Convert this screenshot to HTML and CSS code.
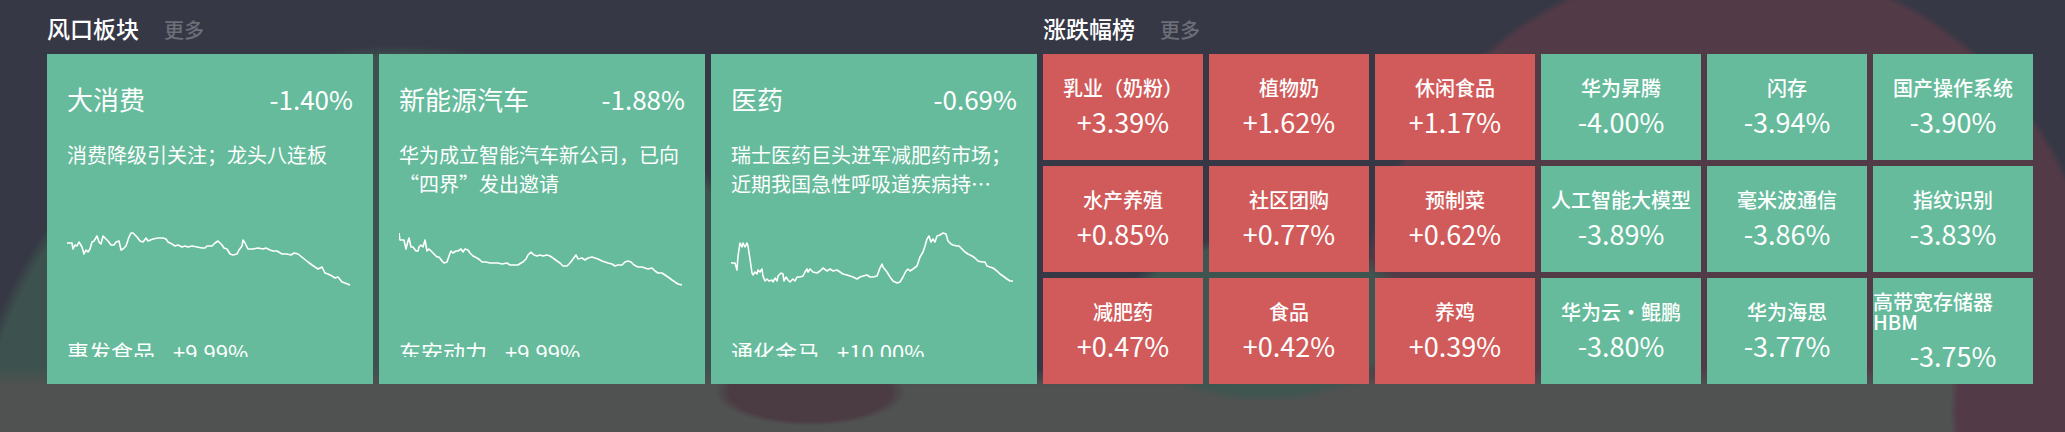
FILE: index.html
```html
<!DOCTYPE html>
<html lang="zh-CN">
<head>
    <meta charset="UTF-8">
    <meta name="viewport" content="width=device-width, initial-scale=1.0">
    <title>板块行情</title>
    <link rel="stylesheet" href="styles.css">
</head>
<body>
    <div class="board">
        <!-- 风口板块 -->
        <section class="panel">
            <div class="panel-head">
                <h2>风口板块</h2>
                <a class="more" href="#">更多</a>
            </div>
            <div class="hot-list">
                <div class="hot-card">
                    <div class="hot-inner">
                        <div class="hot-top"><span>大消费</span><span>-1.40%</span></div>
                        <p class="hot-desc">消费降级引关注；龙头八连板</p>
                        <svg class="hot-chart" viewBox="0 0 286 138" preserveAspectRatio="none">
                            <polyline points="0,45 5,45 6,51 8,47 10,48 12,44 15,49 17,56 19,52 21,54 23,51 25,44 27,43 30,38 32,44 34,46 36,38 38,40 41,43 44,47 47,47 49,44 52,43 54,52 56,51 59,48 62,39 64,35 66,35 70,39 73,43 76,44 79,40 81,43 86,41 91,40 96,40 99,41 101,44 105,46 108,48 111,47 115,49 118,48 121,49 125,48 130,49 135,50 138,50 140,48 145,48 148,45 151,43 155,47 157,50 160,51 163,56 166,57 170,56 172,52 175,48 176,42 178,45 181,51 186,51 191,50 196,51 199,50 203,52 206,53 210,53 215,56 220,56 224,57 227,55 231,56 236,60 241,64 245,67 248,69 251,71 255,69 258,75 261,76 265,78 268,80 271,79 275,84 278,85 283,87"/>
                        </svg>
                        <div class="hot-lead"><span>惠发食品</span><span class="lead-rate">+9.99%</span></div>
                    </div>
                </div>
                <div class="hot-card">
                    <div class="hot-inner">
                        <div class="hot-top"><span>新能源汽车</span><span>-1.88%</span></div>
                        <p class="hot-desc">华为成立智能汽车新公司，已向“四界”发出邀请</p>
                        <svg class="hot-chart" viewBox="0 0 286 138" preserveAspectRatio="none">
                            <polyline points="0,35 1,42 5,42 7,51 9,43 10,40 12,49 14,49 17,53 19,53 20,49 22,47 24,49 26,42 28,53 30,51 33,54 35,56 38,59 40,59 43,63 45,65 48,64 50,58 52,53 54,55 57,53 59,53 62,51 64,54 66,51 69,52 71,55 74,58 78,60 81,62 83,64 87,64 91,65 96,65 99,65 103,66 108,65 111,67 114,67 119,67 122,65 124,64 127,61 129,57 132,54 135,57 138,58 141,57 144,58 148,57 151,58 154,60 158,63 161,65 164,68 168,68 171,65 174,61 177,57 179,61 183,60 186,62 189,60 193,59 196,60 199,61 203,63 206,64 209,65 213,66 216,68 219,67 223,67 226,64 229,63 232,64 235,67 239,69 243,69 246,70 249,71 253,70 256,73 259,75 263,75 266,77 269,79 273,82 276,84 279,86 283,87"/>
                        </svg>
                        <div class="hot-lead"><span>东安动力</span><span class="lead-rate">+9.99%</span></div>
                    </div>
                </div>
                <div class="hot-card">
                    <div class="hot-inner">
                        <div class="hot-top"><span>医药</span><span>-0.69%</span></div>
                        <p class="hot-desc">瑞士医药巨头进军减肥药市场；近期我国急性呼吸道疾病持…</p>
                        <svg class="hot-chart" viewBox="0 0 286 138" preserveAspectRatio="none">
                            <polyline points="0,65 4,65 6,72 7,58 9,45 11,49 12,45 14,49 16,45 17,48 19,61 21,75 22,77 24,74 26,76 27,72 29,74 31,71 32,78 34,83 36,81 38,83 41,82 42,84 44,80 46,83 47,78 50,75 52,76 53,83 55,79 57,82 59,84 62,81 64,83 66,79 69,79 72,78 74,74 76,71 77,74 79,71 82,74 86,75 89,73 92,70 96,73 99,71 102,73 106,72 109,74 112,76 116,77 119,78 122,79 126,81 129,79 132,78 136,77 139,79 142,79 146,78 149,70 151,66 152,69 156,74 159,79 162,83 166,85 169,84 172,79 175,73 177,71 179,73 182,71 186,68 189,59 192,54 194,48 196,41 198,38 200,44 202,41 204,44 206,38 209,37 212,35 215,36 217,43 220,46 222,47 226,48 228,48 231,51 234,54 237,56 241,58 244,60 247,63 251,64 254,64 256,68 259,69 262,70 266,73 269,76 272,78 276,81 279,83 282,83"/>
                        </svg>
                        <div class="hot-lead"><span>通化金马</span><span class="lead-rate">+10.00%</span></div>
                    </div>
                </div>
            </div>
        </section>

        <!-- 涨跌幅榜 -->
        <section class="panel">
            <div class="panel-head">
                <h2>涨跌幅榜</h2>
                <a class="more" href="#">更多</a>
            </div>
            <div class="rank-grid">
                <div class="rank-item up"><span class="rank-name">乳业（奶粉）</span><span class="rank-rate">+3.39%</span></div>
                <div class="rank-item up"><span class="rank-name">植物奶</span><span class="rank-rate">+1.62%</span></div>
                <div class="rank-item up"><span class="rank-name">休闲食品</span><span class="rank-rate">+1.17%</span></div>
                <div class="rank-item down"><span class="rank-name">华为昇腾</span><span class="rank-rate">-4.00%</span></div>
                <div class="rank-item down"><span class="rank-name">闪存</span><span class="rank-rate">-3.94%</span></div>
                <div class="rank-item down"><span class="rank-name">国产操作系统</span><span class="rank-rate">-3.90%</span></div>

                <div class="rank-item up"><span class="rank-name">水产养殖</span><span class="rank-rate">+0.85%</span></div>
                <div class="rank-item up"><span class="rank-name">社区团购</span><span class="rank-rate">+0.77%</span></div>
                <div class="rank-item up"><span class="rank-name">预制菜</span><span class="rank-rate">+0.62%</span></div>
                <div class="rank-item down"><span class="rank-name">人工智能大模型</span><span class="rank-rate">-3.89%</span></div>
                <div class="rank-item down"><span class="rank-name">毫米波通信</span><span class="rank-rate">-3.86%</span></div>
                <div class="rank-item down"><span class="rank-name">指纹识别</span><span class="rank-rate">-3.83%</span></div>

                <div class="rank-item up"><span class="rank-name">减肥药</span><span class="rank-rate">+0.47%</span></div>
                <div class="rank-item up"><span class="rank-name">食品</span><span class="rank-rate">+0.42%</span></div>
                <div class="rank-item up"><span class="rank-name">养鸡</span><span class="rank-rate">+0.39%</span></div>
                <div class="rank-item down"><span class="rank-name">华为云·鲲鹏</span><span class="rank-rate">-3.80%</span></div>
                <div class="rank-item down"><span class="rank-name">华为海思</span><span class="rank-rate">-3.77%</span></div>
                <div class="rank-item down"><span class="rank-name">高带宽存储器HBM</span><span class="rank-rate">-3.75%</span></div>
            </div>
        </section>
    </div>
</body>
</html>
```

FILE: styles.css
```css
* {
    box-sizing: border-box;
    margin: 0;
    padding: 0;
}
body {
    width: 2065px;
    height: 432px;
    overflow: hidden;
    font-family: "Noto Sans CJK SC", "Noto Sans", sans-serif;
    color: #fff;
    background:
        radial-gradient(ellipse 95px 34px at 810px 392px, #4b3b43 85%, rgba(75, 59, 67, 0) 100%),
        radial-gradient(ellipse 150px 85px at 1265px 318px, #3e5550 88%, rgba(62, 85, 80, 0) 100%),
        radial-gradient(ellipse 150px 175px at 2100px 410px, #523a46 95%, rgba(82, 58, 70, 0) 100%),
        linear-gradient(180deg, rgba(80, 82, 81, 0) 368px, #505251 386px),
        radial-gradient(circle 372px at 1730px 330px, #523a47 98%, rgba(82, 58, 71, 0) 100%),
        radial-gradient(circle 434px at 400px 479px, #3d524e 97%, rgba(61, 82, 78, 0) 100%),
        #363845;
}
.board {
    display: flex;
    gap: 6px;
    padding: 0 32px 0 47px;
}
.panel {
    flex: 1;
}
.panel-head {
    height: 54px;
    padding-top: 13px;
    display: flex;
    align-items: baseline;
}
.panel-head h2 {
    font-size: 23px;
    line-height: 30px;
    font-weight: 500;
}
.more {
    margin-left: 25px;
    font-size: 20px;
    font-weight: 500;
    color: #6c6e78;
    text-decoration: none;
}

/* 风口板块卡片 */
.hot-list {
    display: grid;
    grid-template-columns: repeat(3, 1fr);
    gap: 6px;
}
.hot-card {
    height: 330px;
    background: #65bb9b;
    padding: 27px 20px;
}
.hot-inner {
    height: 100%;
    overflow: hidden;
    display: flex;
    flex-direction: column;
}
.hot-top {
    flex: none;
    display: flex;
    justify-content: space-between;
    font-size: 26px;
    line-height: 36px;
}
.hot-desc {
    flex: none;
    margin-top: 23px;
    height: 58px;
    font-size: 20px;
    line-height: 29px;
}
.hot-chart {
    flex: none;
    display: block;
    width: 100%;
    height: 138px;
}
.hot-chart polyline {
    fill: none;
    stroke: #fff;
    stroke-width: 1.6;
    stroke-linejoin: round;
}
.hot-lead {
    flex: none;
    font-size: 22px;
    line-height: 30px;
}
.lead-rate {
    margin-left: 18px;
}

/* 涨跌幅榜 */
.rank-grid {
    display: grid;
    grid-template-columns: repeat(6, 1fr);
    grid-auto-rows: 106px;
    gap: 6px;
}
.rank-item {
    display: flex;
    flex-direction: column;
    align-items: center;
    justify-content: center;
}
.rank-item.up {
    background: #d15b5a;
}
.rank-item.down {
    background: #65bb9b;
}
.rank-name {
    font-size: 20px;
    line-height: 20px;
    font-weight: 500;
}
.rank-rate {
    margin-top: 9px;
    font-size: 27px;
    line-height: 30px;
}
```
